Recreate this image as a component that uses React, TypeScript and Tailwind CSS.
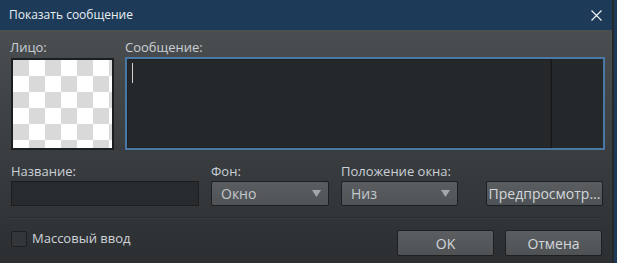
import React from "react";

const font = { fontFamily: '"Open Sans", "Noto Sans", sans-serif' };

const Checker = () => (
  <svg width="99" height="88" className="block">
    <defs>
      <pattern id="chk" width="32" height="32" patternUnits="userSpaceOnUse">
        <rect width="32" height="32" fill="#ffffff" />
        <rect width="16" height="16" fill="#d9d9d9" />
        <rect x="16" y="16" width="16" height="16" fill="#d9d9d9" />
      </pattern>
    </defs>
    <rect width="99" height="88" fill="url(#chk)" />
  </svg>
);

const Arrow = () => (
  <svg width="9" height="7" viewBox="0 0 9 7">
    <path d="M0 0h9L4.5 7z" fill="#a3a8ad" />
  </svg>
);

const CloseIcon = () => (
  <svg width="11" height="11" viewBox="0 0 11 11">
    <path d="M0.5 0.5L10.5 10.5M10.5 0.5L0.5 10.5" stroke="#eef2f6" strokeWidth="1.2" />
  </svg>
);

const Select = ({ value, width }: { value: string; width: string }) => (
  <div
    className={`${width} h-[25px] flex items-center justify-between pl-[9px] pr-[7px] rounded-[2px] border border-[#1d1f21] bg-gradient-to-b from-[#595d60] to-[#505457] text-[14px] text-[#c3c8cd]`}
  >
    <span>{value}</span>
    <Arrow />
  </div>
);

const Button = ({ label, width, height }: { label: string; width: string; height: string }) => (
  <div
    className={`${width} ${height} flex items-center justify-center rounded-[2px] border border-[#1d1f21] bg-gradient-to-b from-[#5a5e61] to-[#4e5255] text-[14px] text-[#d3d7db]`}
  >
    {label}
  </div>
);

export default function App() {
  return (
    <div className="w-[617px] h-[263px] bg-[#1d3b58] overflow-hidden" style={font}>
      <div className="w-[614px] h-[263px] flex flex-col border-r-[2px] border-[#25282b]">
        {/* Title bar */}
        <div className="h-[30px] shrink-0 bg-[#1d3b58] flex items-center justify-between pl-[9px] pr-[10px]">
          <span className="text-[12px] text-[#e9eef3]">Показать сообщение</span>
          <CloseIcon />
        </div>

        {/* Body */}
        <div className="flex-1 bg-gradient-to-b from-[#4b4e51] to-[#2c2f32] pl-[10px] pr-[9px] pt-[9px] text-[13px] text-[#c9d0d7]">
          <div className="flex gap-[11px]">
            <div className="flex flex-col">
              <span className="leading-[16px]">Лицо:</span>
              <div className="mt-[3px] ml-[1px] w-[103px] h-[92px] border-2 border-[#1b1d1f]">
                <Checker />
              </div>
            </div>
            <div className="flex flex-col">
              <span className="leading-[16px]">Сообщение:</span>
              <div className="mt-[2px] w-[480px] h-[93px] border-2 border-[#4a78a6] bg-[#25282b] flex">
                <div className="flex-1 border border-[#1e2022] pl-[4px] pt-[3px]">
                  <div className="w-[1px] h-[20px] bg-[#d0d0d0]" />
                </div>
                <div className="w-[52px] border-l border-[#17191b]" />
              </div>
            </div>
          </div>

          <div className="flex items-end mt-[13px]">
            <div className="flex flex-col ml-[1px]">
              <span className="leading-[16px]">Название:</span>
              <div className="mt-[2px] w-[188px] h-[25px] border border-[#1b1d1f] bg-[#282b2e]" />
            </div>
            <div className="flex flex-col ml-[12px]">
              <span className="leading-[16px]">Фон:</span>
              <div className="mt-[2px]">
                <Select value="Окно" width="w-[118px]" />
              </div>
            </div>
            <div className="flex flex-col ml-[12px]">
              <span className="leading-[16px]">Положение окна:</span>
              <div className="mt-[2px]">
                <Select value="Низ" width="w-[117px]" />
              </div>
            </div>
            <div className="ml-[28px]">
              <Button label="Предпросмотр..." width="w-[117px]" height="h-[25px]" />
            </div>
          </div>

          <div className="mt-[11px] mr-[1px] h-[1px] bg-[#2a2c2f] border-b border-[#3a3d40] box-content" />

          <div className="flex items-start justify-between mt-[10px]">
            <div className="flex items-center gap-[5px] ml-[1px]">
              <div className="w-[16px] h-[16px] rounded-[2px] border border-[#1d1f21] bg-[#34373a]" />
              <span className="text-[13px] text-[#cfd5db]">Массовый ввод</span>
            </div>
            <div className="flex gap-[11px] mt-[1px] mr-[1px]">
              <Button label="OK" width="w-[97px]" height="h-[26px]" />
              <Button label="Отмена" width="w-[97px]" height="h-[26px]" />
            </div>
          </div>
        </div>
      </div>
    </div>
  );
}
